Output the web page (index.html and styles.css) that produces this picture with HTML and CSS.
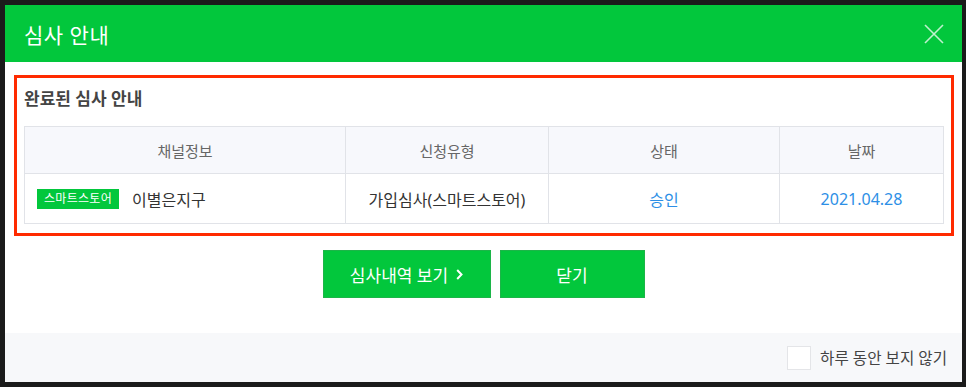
FILE: index.html
```html
<!DOCTYPE html>
<html lang="ko">
<head>
    <meta charset="UTF-8">
    <title>심사 안내</title>
    <link rel="stylesheet" href="styles.css">
</head>
<body>
    <div class="dialog">
        <div class="dialog-header">
            <h1 class="dialog-title">심사 안내</h1>
            <button class="close-btn" aria-label="닫기">
                <svg width="20" height="20" viewBox="0 0 20 20">
                    <path d="M1 1 L19 19 M19 1 L1 19" stroke="rgba(255,255,255,0.75)" stroke-width="1.6" fill="none"/>
                </svg>
            </button>
        </div>
        <div class="dialog-body">
            <div class="review-box">
                <h2 class="review-title">완료된 심사 안내</h2>
                <table class="review-table">
                    <thead>
                        <tr>
                            <th class="col-channel">채널정보</th>
                            <th class="col-type">신청유형</th>
                            <th class="col-state">상태</th>
                            <th class="col-date">날짜</th>
                        </tr>
                    </thead>
                    <tbody>
                        <tr>
                            <td class="channel"><span class="badge">스마트스토어</span><span class="channel-name">이별은지구</span></td>
                            <td>가입심사(스마트스토어)</td>
                            <td class="blue">승인</td>
                            <td class="blue">2021.04.28</td>
                        </tr>
                    </tbody>
                </table>
            </div>
            <div class="actions">
                <button class="btn btn-history">심사내역 보기
                    <svg width="7" height="11" viewBox="0 0 7 11"><path d="M1.2 1 L5.5 5.5 L1.2 10" stroke="#fff" stroke-width="2" fill="none"/></svg>
                </button>
                <button class="btn btn-close">닫기</button>
            </div>
        </div>
        <div class="dialog-footer">
            <label class="hide-today"><span class="check"></span>하루 동안 보지 않기</label>
        </div>
    </div>
</body>
</html>
```

FILE: styles.css
```css
body {
    margin: 0;
    padding: 5px 4px 5px 5px;
    background-color: #1b1b1b;
    font-family: "Noto Sans", "Noto Sans CJK KR", sans-serif;
    color: #333;
}
.dialog {
    width: 957px;
    height: 377px;
    background-color: #fff;
    display: flex;
    flex-direction: column;
}
.dialog-header {
    height: 57px;
    background-color: #02c73c;
    display: flex;
    align-items: center;
    justify-content: space-between;
    padding: 0 18px 0 19px;
}
.dialog-title {
    margin: 0;
    font-size: 21px;
    font-weight: normal;
    color: #fff;
    letter-spacing: 0.5px;
}
.close-btn {
    border: none;
    background: none;
    padding: 0;
    width: 20px;
    height: 20px;
    margin-top: 1px;
}
.dialog-body {
    flex: 1;
}
.review-box {
    margin: 13px 8px 0 9px;
    border: 3px solid #ff2a00;
    padding: 10px 7px 9px 7px;
}
.review-title {
    margin: 0 0 16px 0;
    font-size: 17px;
    line-height: 22px;
    font-weight: bold;
    color: #444;
}
.review-table {
    width: 100%;
    border-collapse: collapse;
    font-size: 16px;
}
.review-table th,
.review-table td {
    border: 1px solid #e1e3e8;
    text-align: center;
    padding: 0;
}
.review-table th {
    height: 46px;
    background-color: #f7f8fc;
    font-weight: normal;
    font-size: 15px;
    color: #666;
}
.review-table td {
    height: 49px;
    color: #333;
}
.col-channel { width: 320px; }
.col-type { width: 202px; }
.col-state { width: 230px; }
.review-table td.channel {
    text-align: left;
    padding-left: 12px;
}
.badge {
    display: inline-block;
    width: 82px;
    height: 20px;
    line-height: 20px;
    background-color: #02c73c;
    color: #fff;
    font-size: 12px;
    text-align: center;
    vertical-align: middle;
    letter-spacing: 0.3px;
}
.channel-name {
    margin-left: 13px;
    font-size: 16px;
    vertical-align: middle;
}
.review-table td.blue {
    color: #2d8fe6;
}
.actions {
    display: flex;
    justify-content: center;
    gap: 9px;
    margin-top: 14px;
}
.btn {
    height: 48px;
    border: 1px solid #1cb548;
    background-color: #02c73c;
    color: #fff;
    font-family: inherit;
    font-size: 17px;
    display: flex;
    align-items: center;
    justify-content: center;
    gap: 8px;
}
.btn-history { width: 168px; }
.btn-close { width: 145px; }
.dialog-footer {
    height: 49px;
    background-color: #f7f8fa;
    display: flex;
    align-items: center;
    justify-content: flex-end;
    padding-right: 15px;
}
.hide-today {
    display: flex;
    align-items: center;
    font-size: 15.6px;
    color: #444;
}
.check {
    width: 22px;
    height: 22px;
    border: 1px solid #e4e5e8;
    background-color: #fff;
    margin-right: 9px;
}
```
